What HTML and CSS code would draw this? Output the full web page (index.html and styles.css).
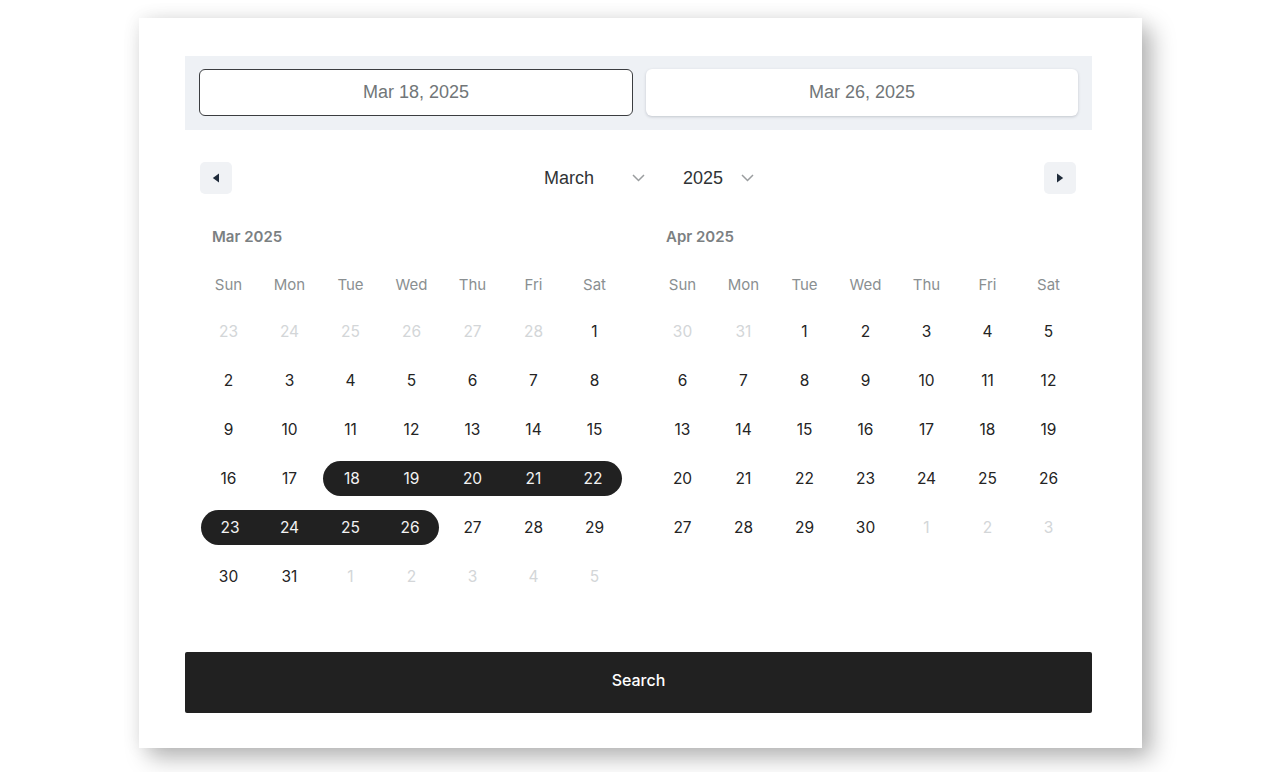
FILE: index.html
```html
<!DOCTYPE html>
<html lang="en">
<head>
<meta charset="utf-8">
<title>Date range picker</title>
<link rel="stylesheet" href="styles.css">
</head>
<body>
<div class="card">
  <div class="inputs">
    <div class="field active">Mar 18, 2025</div>
    <div class="field">Mar 26, 2025</div>
  </div>

  <div class="nav">
    <button class="navbtn" aria-label="Previous month">
      <svg width="8" height="10" viewBox="0 0 8 10"><path d="M7 0.5 L0.8 5 L7 9.5 Z" fill="#1f2b3a"/></svg>
    </button>
    <div class="selects">
      <div class="select sel-month"><span>March</span>
        <svg width="13" height="8" viewBox="0 0 13 8"><path d="M1 1 L6.5 6.5 L12 1" fill="none" stroke="#9a9d9f" stroke-width="1.5"/></svg>
      </div>
      <div class="select sel-year"><span>2025</span>
        <svg width="13" height="8" viewBox="0 0 13 8"><path d="M1 1 L6.5 6.5 L12 1" fill="none" stroke="#9a9d9f" stroke-width="1.5"/></svg>
      </div>
    </div>
    <button class="navbtn" aria-label="Next month">
      <svg width="8" height="10" viewBox="0 0 8 10"><path d="M1 0.5 L7.2 5 L1 9.5 Z" fill="#1f2b3a"/></svg>
    </button>
  </div>

  <div class="months">
    <div class="month">
      <div class="mtitle">Mar 2025</div>
      <div class="grid">
        <div class="wd">Sun</div><div class="wd">Mon</div><div class="wd">Tue</div><div class="wd">Wed</div><div class="wd">Thu</div><div class="wd">Fri</div><div class="wd">Sat</div>
        <div class="d mute"><span>23</span></div><div class="d mute"><span>24</span></div><div class="d mute"><span>25</span></div><div class="d mute"><span>26</span></div><div class="d mute"><span>27</span></div><div class="d mute"><span>28</span></div><div class="d"><span>1</span></div>
        <div class="d"><span>2</span></div><div class="d"><span>3</span></div><div class="d"><span>4</span></div><div class="d"><span>5</span></div><div class="d"><span>6</span></div><div class="d"><span>7</span></div><div class="d"><span>8</span></div>
        <div class="d"><span>9</span></div><div class="d"><span>10</span></div><div class="d"><span>11</span></div><div class="d"><span>12</span></div><div class="d"><span>13</span></div><div class="d"><span>14</span></div><div class="d"><span>15</span></div>
        <div class="d"><span>16</span></div><div class="d"><span>17</span></div><div class="d sel start"><span>18</span></div><div class="d sel"><span>19</span></div><div class="d sel"><span>20</span></div><div class="d sel"><span>21</span></div><div class="d sel end"><span>22</span></div>
        <div class="d sel start"><span>23</span></div><div class="d sel"><span>24</span></div><div class="d sel"><span>25</span></div><div class="d sel end"><span>26</span></div><div class="d"><span>27</span></div><div class="d"><span>28</span></div><div class="d"><span>29</span></div>
        <div class="d"><span>30</span></div><div class="d"><span>31</span></div><div class="d mute"><span>1</span></div><div class="d mute"><span>2</span></div><div class="d mute"><span>3</span></div><div class="d mute"><span>4</span></div><div class="d mute"><span>5</span></div>
      </div>
    </div>
    <div class="month">
      <div class="mtitle">Apr 2025</div>
      <div class="grid">
        <div class="wd">Sun</div><div class="wd">Mon</div><div class="wd">Tue</div><div class="wd">Wed</div><div class="wd">Thu</div><div class="wd">Fri</div><div class="wd">Sat</div>
        <div class="d mute"><span>30</span></div><div class="d mute"><span>31</span></div><div class="d"><span>1</span></div><div class="d"><span>2</span></div><div class="d"><span>3</span></div><div class="d"><span>4</span></div><div class="d"><span>5</span></div>
        <div class="d"><span>6</span></div><div class="d"><span>7</span></div><div class="d"><span>8</span></div><div class="d"><span>9</span></div><div class="d"><span>10</span></div><div class="d"><span>11</span></div><div class="d"><span>12</span></div>
        <div class="d"><span>13</span></div><div class="d"><span>14</span></div><div class="d"><span>15</span></div><div class="d"><span>16</span></div><div class="d"><span>17</span></div><div class="d"><span>18</span></div><div class="d"><span>19</span></div>
        <div class="d"><span>20</span></div><div class="d"><span>21</span></div><div class="d"><span>22</span></div><div class="d"><span>23</span></div><div class="d"><span>24</span></div><div class="d"><span>25</span></div><div class="d"><span>26</span></div>
        <div class="d"><span>27</span></div><div class="d"><span>28</span></div><div class="d"><span>29</span></div><div class="d"><span>30</span></div><div class="d mute"><span>1</span></div><div class="d mute"><span>2</span></div><div class="d mute"><span>3</span></div>
      </div>
    </div>
  </div>

  <button class="search">Search</button>
</div>
</body>
</html>
```

FILE: styles.css
```css
* { box-sizing: border-box; }
html, body { margin: 0; padding: 0; background: #ffffff; }
body {
  width: 1280px;
  height: 772px;
  overflow: hidden;
  font-family: Inter, "Noto Sans", sans-serif;
}
.card {
  margin: 18px 0 0 139px;
  width: 1003px;
  height: 730px;
  background: #ffffff;
  padding: 38px 50px 35px 46px;
  box-shadow: 10px 10px 22px rgba(0, 0, 0, 0.28), 0 0 18px rgba(0, 0, 0, 0.07);
  display: flex;
  flex-direction: column;
}
.inputs {
  height: 74px;
  background: #eef1f5;
  padding: 13px 14px 14px 14px;
  display: flex;
  gap: 13px;
}
.field {
  flex: 1;
  height: 47px;
  background: #ffffff;
  border-radius: 6px;
  display: flex;
  align-items: center;
  justify-content: center;
  font-family: "Liberation Sans", Arial, sans-serif;
  font-size: 18px;
  color: #717678;
  box-shadow: 0 1px 3px rgba(40, 50, 70, 0.22);
}
.field.active {
  border: 1px solid #3b3d40;
  box-shadow: none;
}
.nav {
  margin-top: 32px;
  height: 32px;
  display: flex;
  align-items: center;
  padding: 0 16px 0 15px;
}
.navbtn {
  width: 32px;
  height: 32px;
  border: none;
  border-radius: 5px;
  background: #f0f2f5;
  padding: 0;
  display: flex;
  align-items: center;
  justify-content: center;
}
.selects {
  flex: 1;
  display: flex;
  justify-content: center;
  gap: 38px;
  padding-left: 22px;
}
.select {
  display: flex;
  align-items: center;
  justify-content: space-between;
  font-family: "Liberation Sans", Arial, sans-serif;
  font-size: 18px;
  color: #303335;
}
.sel-month { width: 101px; }
.sel-year { width: 71px; }
.months {
  margin-top: 28px;
  padding: 0 13px;
  display: flex;
  gap: 27px;
}
.month { width: 427px; }
.mtitle {
  height: 40px;
  line-height: 30px;
  padding-left: 14px;
  font-size: 15px;
  font-weight: 600;
  color: #7b8082;
}
.grid {
  display: grid;
  grid-template-columns: repeat(7, 61px);
  grid-auto-rows: 49px;
  grid-template-rows: 45px;
}
.wd {
  display: flex;
  align-items: center;
  justify-content: center;
  font-size: 15px;
  color: #8a8f91;
}
.d {
  display: flex;
  align-items: stretch;
  font-size: 15.5px;
  color: #242424;
}
.d span {
  flex: 1;
  margin: 7px 0;
  display: flex;
  align-items: center;
  justify-content: center;
}
.d.mute { color: #d3d6d8; }
.d.sel span { background: #212121; color: #f2f2f2; }
.d.start span { margin-left: 3px; border-radius: 18px 0 0 18px; }
.d.end span { margin-right: 3px; border-radius: 0 18px 18px 0; }
.search {
  margin-top: auto;
  height: 61px;
  width: 100%;
  border: none;
  border-radius: 2px;
  background: #212121;
  color: #ffffff;
  font-family: Inter, "Noto Sans", sans-serif;
  font-size: 16px;
  font-weight: 500;
  padding: 0 0 5px 0;
}
```
